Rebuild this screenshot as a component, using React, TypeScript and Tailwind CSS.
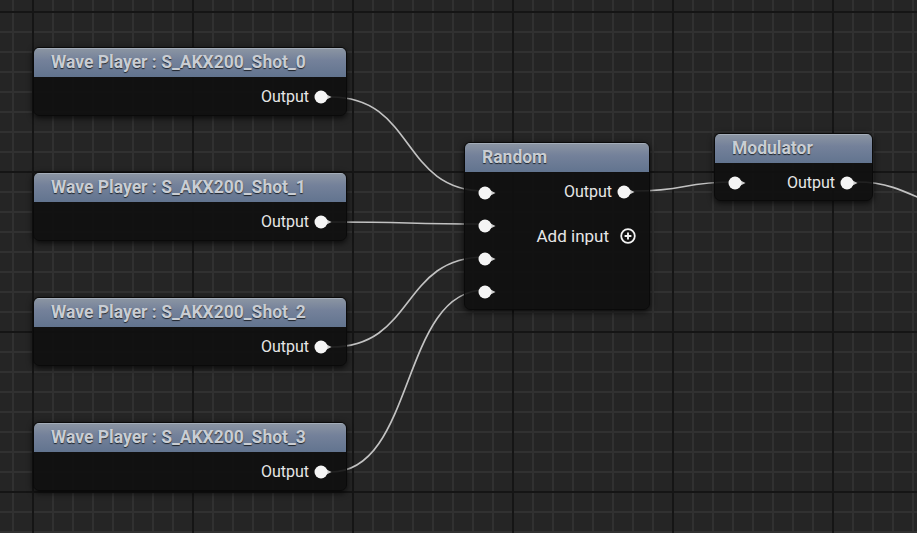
import React from 'react';

const W = 917;
const H = 533;

// output tip -> input pin, horizontal tangents like the UE graph wires
const wire = (x1: number, y1: number, x2: number, y2: number) => {
   const k = Math.max(Math.abs(x2 - x1) * 0.55, 30);
   return `M ${x1} ${y1} C ${x1 + k} ${y1}, ${x2 - k} ${y2}, ${x2} ${y2}`;
};

const wires = [
   wire(331, 97, 485, 191),
   wire(331, 222, 485, 224),
   wire(331, 347, 485, 257),
   wire(331, 472, 485, 290),
   wire(634, 191, 735, 182),
   'M 857 182 C 885 182, 900 189, 935 205',
];

const minorX = Array.from({ length: 46 }, (_, i) => 13 + i * 20);
const minorY = Array.from({ length: 27 }, (_, i) => 12 + i * 20);
const majorX = Array.from({ length: 6 }, (_, i) => 33 + i * 160);
const majorY = Array.from({ length: 4 }, (_, i) => 12 + i * 160);

const GraphCanvas = () => (
   <svg className="absolute inset-0" width={W} height={H} viewBox={`0 0 ${W} ${H}`}>
      <rect width={W} height={H} fill="#252525" />
      {minorX.map((x) => (
         <rect key={'vx' + x} x={x - 1} y={0} width={2} height={H} fill="#313131" />
      ))}
      {minorY.map((y) => (
         <rect key={'hy' + y} x={0} y={y - 1} width={W} height={2} fill="#313131" />
      ))}
      {majorX.map((x) => (
         <rect key={'mx' + x} x={x - 1} y={0} width={2} height={H} fill="#151515" />
      ))}
      {majorY.map((y) => (
         <rect key={'my' + y} x={0} y={y - 1} width={W} height={2} fill="#151515" />
      ))}
      {wires.map((d, i) => (
         <path key={i} d={d} fill="none" stroke="#c2c2c2" strokeWidth={1.7} strokeLinecap="round" />
      ))}
   </svg>
);

const Pin = () => (
   <svg width="18" height="14" viewBox="0 0 18 14" className="shrink-0">
      <polygon points="10.5,3.4 17.5,7 10.5,10.6" fill="#cdcdcd" />
      <circle cx="7" cy="7" r="6.5" fill="#f5f5f5" />
   </svg>
);

const PlusCircle = () => (
   <svg width="16" height="16" viewBox="0 0 16 16" className="shrink-0">
      <circle cx="8" cy="8" r="6.8" fill="none" stroke="#f2f2f2" strokeWidth="1.8" />
      <path d="M8 4.6 V11.4 M4.6 8 H11.4" stroke="#f2f2f2" strokeWidth="1.9" />
   </svg>
);

const nodeShell =
   'absolute flex flex-col overflow-hidden rounded-[6px] border border-[#0a0a0a] bg-[#0f100f]/90 shadow-[0_2px_6px_rgba(0,0,0,0.75)]';

const Header = ({ title }: { title: string }) => (
   <div className="flex h-[29px] shrink-0 items-center border-t border-[#a4adb9] bg-[linear-gradient(180deg,#8a94a2_0%,#74819a_40%,#62748f_100%)] px-[17px]">
      <span className="text-[17.5px] font-bold leading-none text-[#c9cdd3] [text-shadow:0_1px_1px_rgba(0,0,0,0.7)]">
         {title}
      </span>
   </div>
);

const OutputRow = ({ className = '' }: { className?: string }) => (
   <div className={`flex h-[24px] items-center justify-end gap-[5px] ${className}`}>
      <span className="text-[16px] leading-none text-[#e6e6e6]">Output</span>
      <Pin />
   </div>
);

const wavePlayers = [
   { title: 'Wave Player : S_AKX200_Shot_0', pos: 'left-[33px] top-[47px]' },
   { title: 'Wave Player : S_AKX200_Shot_1', pos: 'left-[33px] top-[172px]' },
   { title: 'Wave Player : S_AKX200_Shot_2', pos: 'left-[33px] top-[297px]' },
   { title: 'Wave Player : S_AKX200_Shot_3', pos: 'left-[33px] top-[422px]' },
];

const WavePlayerNode = ({ title, pos }: { title: string; pos: string }) => (
   <div className={`${nodeShell} ${pos} h-[69px] w-[314px]`}>
      <Header title={title} />
      <OutputRow className="mt-[8px] pr-[14px]" />
   </div>
);

const RandomNode = () => (
   <div className={`${nodeShell} left-[464px] top-[142px] h-[168px] w-[186px]`}>
      <Header title="Random" />
      <div className="flex flex-1">
         <div className="flex flex-col pl-[13px] pt-[4px]">
            {[0, 1, 2, 3].map((i) => (
               <div key={i} className="flex h-[33px] items-center">
                  <Pin />
               </div>
            ))}
         </div>
         <div className="flex flex-1 flex-col pt-[8px]">
            <OutputRow className="pr-[14px]" />
            <div className="mt-[20px] flex h-[24px] items-center justify-end gap-[11px] pr-[13px]">
               <span className="text-[17px] leading-none text-[#e6e6e6]">Add input</span>
               <PlusCircle />
            </div>
         </div>
      </div>
   </div>
);

const ModulatorNode = () => (
   <div className={`${nodeShell} left-[714px] top-[133px] h-[68px] w-[159px]`}>
      <Header title="Modulator" />
      <div className="mt-[8px] flex h-[24px] items-center justify-between pl-[13px]">
         <Pin />
         <OutputRow className="pr-[14px]" />
      </div>
   </div>
);

export default function App() {
   return (
      <div className="relative h-[533px] w-[917px] overflow-hidden bg-[#252525] font-['Roboto','Liberation_Sans',sans-serif]">
         <GraphCanvas />
         {wavePlayers.map((n) => (
            <WavePlayerNode key={n.title} title={n.title} pos={n.pos} />
         ))}
         <RandomNode />
         <ModulatorNode />
      </div>
   );
}
